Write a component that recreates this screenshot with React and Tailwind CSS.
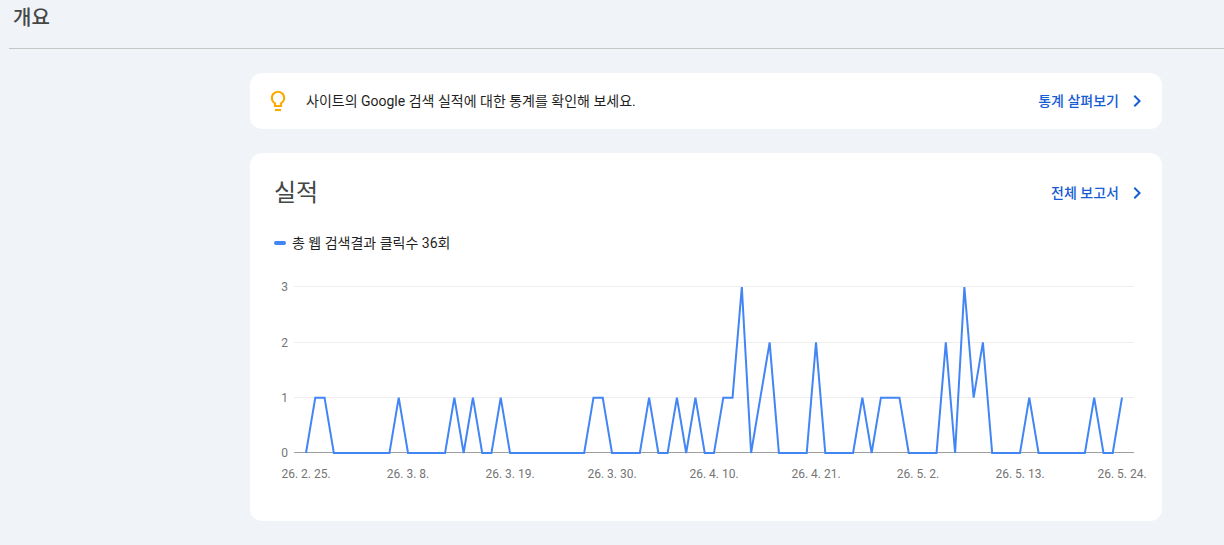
import React from 'react'

// Clicks per day, 26. 2. 25. to 26. 5. 24.
const CLICKS = [
  0, 1, 1, 0, 0, 0, 0, 0, 0, 0, 1,
  0, 0, 0, 0, 0, 1, 0, 1, 0, 0, 1,
  0, 0, 0, 0, 0, 0, 0, 0, 0, 1, 1,
  0, 0, 0, 0, 1, 0, 0, 1, 0, 1, 0,
  0, 1, 1, 3, 0, 1, 2, 0, 0, 0, 0,
  2, 0, 0, 0, 0, 1, 0, 1, 1, 1, 0,
  0, 0, 0, 2, 0, 3, 1, 2, 0, 0, 0,
  0, 1, 0, 0, 0, 0, 0, 0, 1, 0, 0,
  1,
]

const X_LABELS = [
  '26. 2. 25.', '26. 3. 8.', '26. 3. 19.', '26. 3. 30.', '26. 4. 10.',
  '26. 4. 21.', '26. 5. 2.', '26. 5. 13.', '26. 5. 24.',
]

const Y_TICKS = [
  { value: 3, y: 13.5 },
  { value: 2, y: 69.5 },
  { value: 1, y: 124.5 },
  { value: 0, y: 179.5 },
]

const xAt = (day) => 44 + (day * 816) / 88
const yAt = (clicks) => 180 - (clicks * 166) / 3

function BulbIcon() {
  return (
    <svg viewBox="0 0 24 24" className="h-6 w-6 shrink-0" fill="none" stroke="#fbab00" strokeWidth="2.2" aria-hidden="true">
      <path d="M9 17v-2.6a6.2 6.2 0 1 1 6 0V17z" />
      <path d="M9 21h6" />
    </svg>
  )
}

function CardLink({ children }) {
  return (
    <a href="#" className="flex items-center gap-1.5 text-sm font-medium text-[#175dd3]">
      {children}
      <svg viewBox="0 0 24 24" className="h-6 w-6" fill="currentColor" aria-hidden="true">
        <path d="M10 6 8.59 7.41 13.17 12l-4.58 4.59L10 18l6-6z" />
      </svg>
    </a>
  )
}

function ClicksChart() {
  const points = CLICKS.map((c, i) => `${xAt(i)},${yAt(c)}`).join(' ')

  return (
    <svg viewBox="0 0 888 224" className="block w-full" role="img" aria-label="총 웹 검색결과 클릭수">
      {Y_TICKS.map(({ value, y }) => (
        <g key={value}>
          <line x1="32" x2="872" y1={y} y2={y} stroke={value === 0 ? '#9e9e9e' : '#eeeeee'} />
          <text x="26" y={y + 4.5} textAnchor="end" className="fill-[#757575] text-xs">{value}</text>
        </g>
      ))}
      <polyline points={points} fill="none" stroke="#4285f4" strokeWidth="2" />
      {X_LABELS.map((label, i) => (
        <text key={label} x={xAt(i * 11)} y="205" textAnchor="middle" className="fill-[#757575] text-xs">
          {label}
        </text>
      ))}
    </svg>
  )
}

function App() {
  return (
    <div className="min-h-screen bg-[#f0f3f8] pb-6 font-[Roboto,'Noto_Sans_CJK_KR',sans-serif] text-[#1f1f1f]">
      <header className="ml-[9px] border-b border-[#c4c7c5] px-1 pt-1 pb-4">
        <h1 className="text-xl font-medium text-[#444746]">개요</h1>
      </header>

      <main className="flex flex-col gap-6 pt-6 pr-[62px] pl-[250px]">
        <section className="flex h-14 items-center justify-between rounded-xl bg-white pr-[13px] pl-4">
          <div className="flex items-center gap-4">
            <BulbIcon />
            <p className="text-sm">사이트의 Google 검색 실적에 대한 통계를 확인해 보세요.</p>
          </div>
          <CardLink>통계 살펴보기</CardLink>
        </section>

        <section className="rounded-xl bg-white py-6">
          <div className="flex items-center justify-between pr-[13px] pl-6">
            <h2 className="text-2xl text-[#444746]">실적</h2>
            <CardLink>전체 보고서</CardLink>
          </div>

          <div className="mt-6 mb-5 flex items-center gap-1.5 px-6">
            <span className="h-1 w-3 rounded-full bg-[#4285f4]" />
            <span className="text-sm">총 웹 검색결과 클릭수 36회</span>
          </div>

          <div className="px-3">
            <ClicksChart />
          </div>
        </section>
      </main>
    </div>
  )
}

export default App
